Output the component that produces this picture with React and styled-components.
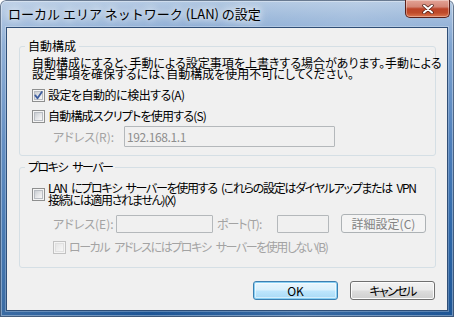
import React from 'react';
import styled, { createGlobalStyle } from 'styled-components';

const Global = createGlobalStyle`
  html, body { margin: 0; padding: 0; }
  body {
    width: 454px; height: 317px; overflow: hidden;
    font-family: "Noto Sans CJK JP", "Noto Sans", sans-serif;
    background: #ffffff;
  }
`;

const Window = styled.div`
  width: 454px;
  height: 317px;
  box-sizing: border-box;
  padding: 0 6px 6px;
  display: flex;
  flex-direction: column;
  border-radius: 6px 6px 0 0;
  background:
    linear-gradient(100deg, rgba(255,255,255,0.18) 0%, rgba(255,255,255,0) 40%, rgba(255,255,255,0.12) 70%, rgba(255,255,255,0) 100%),
    linear-gradient(180deg, #b3c9e3 0px, #9ab7da 18px, #7ba1cf 45px, #4a7cb9 140px, #2c66a8 230px, #1d5595 317px);
  box-shadow: inset 0 0 0 1px rgba(20, 40, 70, 0.55), inset 0 0 0 2px rgba(255,255,255,0.35);
`;

const TitleBar = styled.div`
  height: 27px;
  display: flex;
  justify-content: space-between;
  align-items: flex-start;
  flex-shrink: 0;
`;

const Title = styled.div`
  padding: 5px 0 0 2px;
  font-size: 13px;
  line-height: 17px;
  color: #000;
  white-space: nowrap;
  text-shadow: 0 0 6px rgba(255,255,255,0.95), 0 0 10px rgba(255,255,255,0.8), 0 0 14px rgba(255,255,255,0.6);
`;

const CloseButton = styled.div`
  width: 45px;
  height: 18px;
  margin-right: -2px;
  box-sizing: border-box;
  display: flex;
  align-items: center;
  justify-content: center;
  border: 1px solid #5a2019;
  border-top: none;
  border-radius: 0 0 5px 5px;
  background: linear-gradient(180deg, #e3a396 0%, #d48676 40%, #bc4429 52%, #bf4b2a 75%, #dc7650 100%);
  box-shadow: inset 0 0 0 1px rgba(255,255,255,0.35);
`;

const Client = styled.div`
  flex: 1;
  border: 1px solid #2f4e76;
  box-shadow: 0 0 0 1px rgba(255,255,255,0.25);
  background: #f0f0f0;
  padding: 11px 11px 0 12px;
  display: flex;
  flex-direction: column;
  font-size: 12px;
  color: #000;
  font-feature-settings: "palt";
`;

const Group = styled.fieldset`
  margin: ${p => p.$top || 0}px 0 0 0;
  padding: 0;
  border: 1px solid #d5dfe5;
  border-radius: 3px;
  min-width: 0;
`;

const Legend = styled.legend`
  margin-left: 5px;
  padding: 0 3px;
  font-size: 12px;
  line-height: 14px;
  letter-spacing: ${p => p.$ls || 0}px;
  word-spacing: ${p => p.$ws || 0}px;
  white-space: nowrap;
`;

const GroupBody = styled.div`
  padding: ${p => p.$pad};
  display: flex;
  flex-direction: column;
`;

const Description = styled.div`
  line-height: 11px;
  white-space: nowrap;
`;

const CheckRow = styled.div`
  display: flex;
  align-items: center;
  gap: 3px;
  margin: ${p => p.$top || 0}px 0 0 ${p => p.$indent || 0}px;
  line-height: ${p => p.$lh || 14}px;
  letter-spacing: ${p => p.$ls || 0}px;
  word-spacing: ${p => p.$ws || 0}px;
  color: ${p => (p.$disabled ? '#a3a3a3' : '#000')};
  white-space: nowrap;
`;

const Box = styled.span`
  position: relative;
  flex: none;
  width: 13px;
  height: 13px;
  box-sizing: border-box;
  border: 1px solid ${p => (p.$disabled ? '#c2c2c2' : '#8e8f8f')};
  background: #f4f4f4;
  &::before {
    content: '';
    position: absolute;
    inset: 1px;
    border: 1px solid ${p => (p.$disabled ? '#e0e0e0' : '#b8bcc2')};
    background: ${p => (p.$disabled
      ? 'linear-gradient(135deg, #e6e6e6 0%, #f7f7f7 100%)'
      : 'linear-gradient(135deg, #c9cdd2 0%, #e6e7e9 55%, #f8f8f8 100%)')};
  }
  svg { position: absolute; left: -1px; top: -1px; }
`;

const Row = styled.div`
  display: flex;
  align-items: center;
  height: ${p => p.$h}px;
  margin: ${p => p.$top || 0}px 0 0 21px;
  white-space: nowrap;
`;

const Label = styled.span`
  width: ${p => p.$w}px;
  flex: none;
  margin-left: ${p => p.$ml || 0}px;
  letter-spacing: ${p => p.$ls || 0}px;
  color: #a3a3a3;
  line-height: 14px;
`;

const TextBox = styled.input`
  width: ${p => p.$w}px;
  height: ${p => p.$h}px;
  flex: none;
  box-sizing: border-box;
  margin: 0;
  padding: 0 2px;
  border: 1px solid #b4b8bb;
  border-radius: 1px;
  background: #f0f0f0;
  font-family: inherit;
  font-size: 12px;
  letter-spacing: -0.4px;
  color: #8d8d8d;
  -webkit-text-fill-color: #8d8d8d;
  opacity: 1;
  outline: none;
`;

const Button = styled.button`
  width: 85px;
  height: ${p => p.$h || 19}px;
  flex: none;
  box-sizing: border-box;
  margin: 0 0 0 ${p => p.$ml || 0}px;
  padding: 0;
  font-family: inherit;
  font-size: 12px;
  line-height: 14px;
  letter-spacing: ${p => p.$ls || 0}px;
  font-feature-settings: "palt";
  border-radius: 3px;
  color: ${p => (p.$variant === 'disabled' ? '#838383' : '#000')};
  border: 1px solid ${p => (p.$variant === 'default' ? '#3c7fb1' : p.$variant === 'disabled' ? '#adb2b5' : '#707070')};
  background: ${p => (p.$variant === 'default'
    ? 'linear-gradient(180deg, #eaf6fd 0%, #d9f0fc 48%, #bee6fd 52%, #a7d9f5 100%)'
    : p.$variant === 'disabled'
      ? '#f4f4f4'
      : 'linear-gradient(180deg, #f2f2f2 0%, #ebebeb 48%, #dddddd 52%, #cfcfcf 100%)')};
  box-shadow: ${p => (p.$variant === 'default'
    ? 'inset 0 0 0 1px #8ad0f3, inset 0 0 0 2px rgba(255,255,255,0.5)'
    : p.$variant === 'disabled'
      ? 'none'
      : 'inset 0 0 0 1px #fcfcfc')};
`;

const ButtonRow = styled.div`
  display: flex;
  justify-content: flex-end;
  gap: 12px;
  margin-top: 13px;
  padding-right: 1px;
`;

function CheckBox({ checked, disabled }) {
  return (
    <Box $disabled={disabled}>
      {checked && (
        <svg width="13" height="13" viewBox="0 0 13 13">
          <path d="M3.3 6.4 L5.5 9.2 L9.8 3" fill="none" stroke="#3d5d9f" strokeWidth="1.8" strokeLinecap="round" strokeLinejoin="round" />
        </svg>
      )}
    </Box>
  );
}

export default function App() {
  return (
    <>
      <Global />
      <Window>
        <TitleBar>
          <Title>ローカル エリア ネットワーク (LAN) の設定</Title>
          <CloseButton>
            <svg width="12" height="10" viewBox="0 0 12 10">
              <path d="M2 1.5 L10 8.5 M10 1.5 L2 8.5" stroke="#4a1a12" strokeWidth="3.4" strokeLinecap="round" />
              <path d="M2 1.5 L10 8.5 M10 1.5 L2 8.5" stroke="#ffffff" strokeWidth="2" strokeLinecap="round" />
            </svg>
          </CloseButton>
        </TitleBar>
        <Client>
          <Group>
            <Legend>自動構成</Legend>
            <GroupBody $pad="4px 12px 8px 12px">
              <Description>
                自動構成にすると、手動による設定事項を上書きする場合があります。手動による
                <br />
                設定事項を確保するには、自動構成を使用不可にしてください。
              </Description>
              <CheckRow $top={9} $ls={-0.5}>
                <CheckBox checked />
                <span>設定を自動的に検出する(A)</span>
              </CheckRow>
              <CheckRow $top={7} $ls={-0.8}>
                <CheckBox />
                <span>自動構成スクリプトを使用する(S)</span>
              </CheckRow>
              <Row $h={21} $top={3}>
                <Label $w={71}>アドレス(R):</Label>
                <TextBox $w={211} $h={21} disabled readOnly value="192.168.1.1" />
              </Row>
            </GroupBody>
          </Group>
          <Group $top={4}>
            <Legend $ls={-1.5} $ws={4}>プロキシ サーバー</Legend>
            <GroupBody $pad="8px 12px 13px 12px">
              <CheckRow $lh={12} $ls={-1.3} $ws={3}>
                <CheckBox />
                <span>
                  LAN にプロキシ サーバーを使用する (これらの設定はダイヤルアップまたは VPN
                  <br />
                  接続には適用されません)(X)
                </span>
              </CheckRow>
              <Row $h={19} $top={8}>
                <Label $w={63}>アドレス(E):</Label>
                <TextBox $w={97} $h={18} disabled readOnly value="" />
                <Label $w={60} $ml={4} $ls={-1}>ポート(T):</Label>
                <TextBox $w={52} $h={18} disabled readOnly value="" />
                <Button $variant="disabled" $ml={12} disabled>詳細設定(C)</Button>
              </Row>
              <CheckRow $top={7} $indent={21} $ls={-1.45} $ws={4} $disabled>
                <CheckBox disabled />
                <span>ローカル アドレスにはプロキシ サーバーを使用しない(B)</span>
              </CheckRow>
            </GroupBody>
          </Group>
          <ButtonRow>
            <Button $variant="default">OK</Button>
            <Button $ls={-1.6}>キャンセル</Button>
          </ButtonRow>
        </Client>
      </Window>
    </>
  );
}
